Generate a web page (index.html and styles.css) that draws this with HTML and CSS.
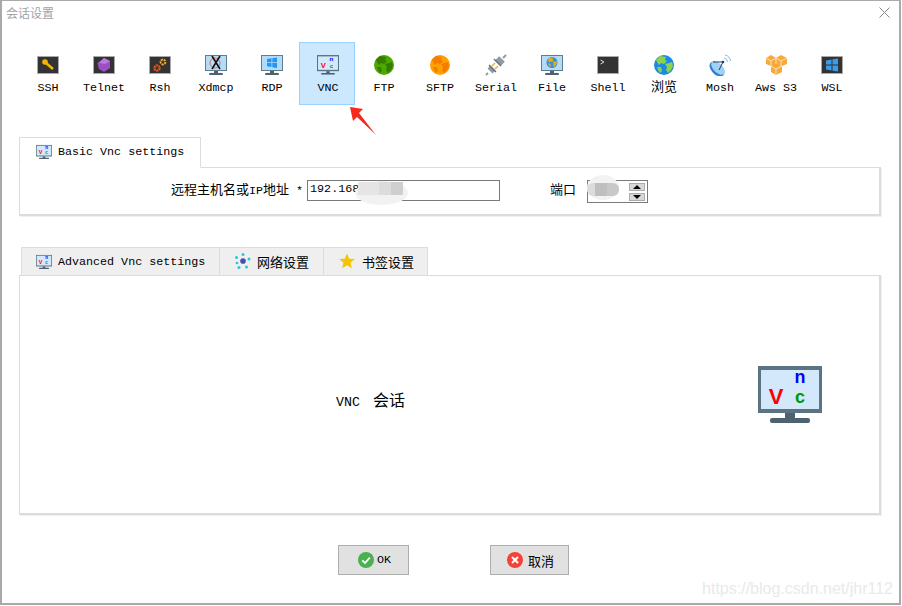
FILE: index.html
```html
<!DOCTYPE html>
<html lang="zh-CN">
<head>
  <meta charset="UTF-8">
  <meta name="viewport" content="width=device-width, initial-scale=1.0">
  <title>会话设置</title>
  <link rel="stylesheet" href="styles.css">
</head>
<body>
  <!-- icon sheet -->
  <svg class="sheet" aria-hidden="true">
    <symbol id="i-screen" viewBox="0 0 64 57">
      <rect width="64" height="47" fill="#5b7482"/>
      <rect x="3" y="4" width="58" height="39" fill="#d3e8fb"/>
      <rect x="27" y="47" width="10" height="6" fill="#4d6470"/>
      <rect x="12" y="52" width="40" height="5" rx="2" fill="#4d6470"/>
    </symbol>
    <symbol id="i-monitor" viewBox="0 0 22 20">
      <rect width="22" height="16" fill="#5f7d8c"/>
      <rect x="1" y="1" width="20" height="14" fill="#b3dcfa"/>
      <rect x="9" y="16" width="4" height="2" fill="#4d6470"/>
      <rect x="4" y="18" width="14" height="2" rx="1" fill="#4d6470"/>
    </symbol>
    <symbol id="i-dark" viewBox="0 0 22 18">
      <rect width="22" height="18" fill="#aaa"/>
      <rect x="1" y="1" width="20" height="16" fill="#333"/>
    </symbol>
    <symbol id="i-land" viewBox="0 0 20 20">
      <path d="M6 1 L12 2 L11 5 L13 6 L10 9 L7 8 L5 10 L3 7 L2 5 Z"/>
      <path d="M11 9 L15 8 L18 7 L19 11 L17 15 L14 18 L12 15 L13 12 Z"/>
      <path d="M3 12 L7 12 L8 16 L6 18 L4 15 Z"/>
    </symbol>
  </svg>

  <div class="window">
    <div class="titlebar">
      <span class="title">会话设置</span>
      <svg class="close" viewBox="0 0 11 11"><path d="M0.5 0.5 L10.500 10.500 M10.500 0.500 L0.500 10.500" stroke="#888" fill="none"/></svg>
    </div>

    <div class="toolbar">
      <div class="tool">
        <svg class="tool-icon" viewBox="0 0 22 22">
          <use href="#i-dark" x="0" y="2" width="22" height="18"/>
          <circle cx="8" cy="8" r="2.800" fill="#f4b400"/>
          <path d="M9 9 L16 15" stroke="#f4b400" stroke-width="2.500"/>
        </svg>
        <span class="tool-name">SSH</span>
      </div>
      <div class="tool">
        <svg class="tool-icon" viewBox="0 0 22 22">
          <use href="#i-dark" x="0" y="2" width="22" height="18"/>
          <path d="M11 4 L17 7 L17 14 L11 18 L6 15 L4.500 9 Z" fill="#9c4fc4"/>
          <path d="M11 4 L17 7 L12 10 L6 9 Z" fill="#b77be0"/>
        </svg>
        <span class="tool-name">Telnet</span>
      </div>
      <div class="tool">
        <svg class="tool-icon" viewBox="0 0 22 22">
          <use href="#i-dark" x="0" y="2" width="22" height="18"/>
          <circle cx="14" cy="8" r="2.400" fill="none" stroke="#f5a623" stroke-width="2" stroke-dasharray="2 0.700"/>
          <circle cx="8" cy="14" r="2.600" fill="none" stroke="#e8561f" stroke-width="2.200" stroke-dasharray="2 0.700"/>
        </svg>
        <span class="tool-name">Rsh</span>
      </div>
      <div class="tool">
        <svg class="tool-icon" viewBox="0 0 22 22">
          <use href="#i-monitor" x="0" y="1" width="22" height="20"/>
          <circle cx="10" cy="9" r="5" fill="none" stroke="#d9724a" stroke-width="1"/>
          <path d="M7 2 L15 15 M15 2 L7 15" stroke="#111" stroke-width="1.600"/>
        </svg>
        <span class="tool-name">Xdmcp</span>
      </div>
      <div class="tool">
        <svg class="tool-icon" viewBox="0 0 22 22">
          <use href="#i-monitor" x="0" y="1" width="22" height="20"/>
          <path d="M6 5 L10.500 4.300 V8.300 H6 Z M11.300 4.200 L16 3.500 V8.300 H11.300 Z M6 9 H10.500 V13 L6 12.300 Z M11.300 9 H16 V14 L11.300 13.200 Z" fill="#2196f3"/>
        </svg>
        <span class="tool-name">RDP</span>
      </div>
      <div class="tool tool-active">
        <svg class="tool-icon" viewBox="0 -3 64 64">
          <use href="#i-screen" width="64" height="57"/>
          <text x="18" y="38" class="logo-letter" fill="#f00" font-size="22">V</text>
          <text x="42" y="16.500" class="logo-letter" fill="#00f" font-size="18">n</text>
          <text x="42" y="37" class="logo-letter" fill="#090" font-size="18">c</text>
        </svg>
        <span class="tool-name">VNC</span>
      </div>
      <div class="tool">
        <svg class="tool-icon" viewBox="0 0 22 22">
          <circle cx="11" cy="11" r="10" fill="#4fa800"/>
          <use href="#i-land" x="1" y="1" width="20" height="20" fill="#347d00"/>
        </svg>
        <span class="tool-name">FTP</span>
      </div>
      <div class="tool">
        <svg class="tool-icon" viewBox="0 0 22 22">
          <circle cx="11" cy="11" r="10" fill="#ffa000"/>
          <use href="#i-land" x="1" y="1" width="20" height="20" fill="#f57c00"/>
        </svg>
        <span class="tool-name">SFTP</span>
      </div>
      <div class="tool">
        <svg class="tool-icon" viewBox="0 0 22 22">
          <path d="M13 9 L17 5" stroke="#8f9ba3" stroke-width="8"/>
          <path d="M18 4 L21 1" stroke="#8f9ba3" stroke-width="2"/>
          <path d="M5 17 L8 14" stroke="#8f9ba3" stroke-width="7"/>
          <path d="M3 19 L1 21" stroke="#8f9ba3" stroke-width="2"/>
          <path d="M9 5 L16 12" stroke="#5f7480" stroke-width="1.500"/>
          <path d="M4 11 L11 18" stroke="#5f7480" stroke-width="1.500"/>
          <path d="M7 12 L10 9 M10 15 L13 12" stroke="#f5b335" stroke-width="1.500"/>
        </svg>
        <span class="tool-name">Serial</span>
      </div>
      <div class="tool">
        <svg class="tool-icon" viewBox="0 0 22 22">
          <use href="#i-monitor" x="0" y="1" width="22" height="20"/>
          <circle cx="11" cy="8.500" r="5.500" fill="#3b8edb"/>
          <use href="#i-land" x="5.500" y="3" width="11" height="11" fill="#d8b020"/>
        </svg>
        <span class="tool-name">File</span>
      </div>
      <div class="tool">
        <svg class="tool-icon" viewBox="0 0 22 22">
          <use href="#i-dark" x="0" y="2" width="22" height="18"/>
          <path d="M3.500 6 L7 8 L3.500 10" stroke="#ddd" fill="none"/>
        </svg>
        <span class="tool-name">Shell</span>
      </div>
      <div class="tool">
        <svg class="tool-icon" viewBox="0 0 22 22">
          <circle cx="11" cy="11" r="10" fill="#1e88e5"/>
          <use href="#i-land" x="1" y="1" width="20" height="20" fill="#8bd34a"/>
        </svg>
        <span class="tool-name cjk">浏览</span>
      </div>
      <div class="tool">
        <svg class="tool-icon" viewBox="0 0 22 22">
          <ellipse cx="8" cy="15" rx="5.500" ry="9" transform="rotate(-45 8 15)" fill="#2f7fd0"/>
          <ellipse cx="9" cy="14" rx="4.500" ry="8.500" transform="rotate(-45 9 14)" fill="#9fd0f8"/>
          <path d="M4 8 L14 8 M14 8 L10 16" stroke="#1c3f66" fill="none"/>
          <circle cx="14" cy="8" r="1.300" fill="#1c3f66"/>
          <path d="M15 4 A4 4 0 0 1 18.500 8 M16 1 A7 7 0 0 1 21.500 7" stroke="#7fbdf0" fill="none"/>
        </svg>
        <span class="tool-name">Mosh</span>
      </div>
      <div class="tool">
        <svg class="tool-icon" viewBox="0 0 22 22">
          <path d="M1 4 L6 1 L11 4 L16 1 L22 4 L22 10 L17 12 L17 18 L11 21 L6 18 L6 12 L1 10 Z" fill="#f8a93a"/>
          <path d="M1 4 L6 7 L11 4 M11 4 L16 7 L22 4 M6 7 V12 M16 7 V12 M11 4 V10 M6 12 L11 15 L17 12 M11 15 V21" stroke="#fde0b0" fill="none"/>
        </svg>
        <span class="tool-name">Aws S3</span>
      </div>
      <div class="tool">
        <svg class="tool-icon" viewBox="0 0 22 22">
          <use href="#i-dark" x="0" y="2" width="22" height="18"/>
          <path d="M5 6.500 L10.500 5.500 V10.500 H5 Z M11.500 5.300 L17 4.500 V10.500 H11.500 Z M5 11.500 H10.500 V16.500 L5 15.500 Z M11.500 11.500 H17 V17.500 L11.500 16.700 Z" fill="#3b9be8"/>
        </svg>
        <span class="tool-name">WSL</span>
      </div>
    </div>

    <div class="arrow-mark">
      <svg viewBox="0 0 32 32" width="32" height="32"><path d="M1 1 L14 3 L10 7 L27 29 L8 11 L4 15 Z" fill="#f5291c"/></svg>
    </div>

    <section class="group">
      <div class="tabs">
        <div class="tab tab-open">
          <svg class="tab-icon" viewBox="0 -3 64 64">
            <use href="#i-screen" width="64" height="57"/>
            <text x="18" y="38" class="logo-letter" fill="#f00" font-size="22">V</text>
            <text x="42" y="16.500" class="logo-letter" fill="#00f" font-size="18">n</text>
            <text x="42" y="37" class="logo-letter" fill="#090" font-size="18">c</text>
          </svg>
          <span>Basic Vnc settings</span>
        </div>
      </div>
      <div class="panel panel-basic">
        <label class="field-label"><span class="cjk">远程主机名或</span>IP<span class="cjk">地址</span> *</label>
        <div class="text-input">
          192.168
          <div class="smudge smudge-host">
            <i class="patch patch-a"></i><i class="patch patch-b"></i><i class="patch patch-c"></i>
          </div>
        </div>
        <label class="field-label port-label"><span class="cjk">端口</span></label>
        <div class="spinner">
          <div class="smudge smudge-port">
            <i class="patch patch-d"></i><i class="patch patch-e"></i><i class="patch patch-f"></i>
          </div>
          <div class="spin-buttons">
            <div class="spin-btn"><i class="tri-up"></i></div>
            <div class="spin-btn"><i class="tri-down"></i></div>
          </div>
        </div>
      </div>
    </section>

    <section class="group group-advanced">
      <div class="tabs tabs-inset">
        <div class="tab tab-wide">
          <svg class="tab-icon" viewBox="0 -3 64 64">
            <use href="#i-screen" width="64" height="57"/>
            <text x="18" y="38" class="logo-letter" fill="#f00" font-size="22">V</text>
            <text x="42" y="16.500" class="logo-letter" fill="#00f" font-size="18">n</text>
            <text x="42" y="37" class="logo-letter" fill="#090" font-size="18">c</text>
          </svg>
          <span>Advanced Vnc settings</span>
        </div>
        <div class="tab tab-net">
          <svg class="tab-icon" viewBox="0 0 16 16">
            <circle cx="8" cy="8" r="2.800" fill="#3f51b5"/>
            <circle cx="8" cy="1.500" r="1.500" fill="#26c6da"/>
            <circle cx="1.500" cy="4.500" r="1.500" fill="#26c6da"/>
            <circle cx="14" cy="6" r="1.500" fill="#26c6da"/>
            <circle cx="2" cy="10" r="1.300" fill="#26c6da"/>
            <circle cx="4" cy="14.500" r="1.500" fill="#26c6da"/>
            <circle cx="11.500" cy="14" r="1.500" fill="#26c6da"/>
          </svg>
          <span class="cjk">网络设置</span>
        </div>
        <div class="tab tab-mark">
          <svg class="tab-icon" viewBox="0 0 16 16"><path d="M8 0.500 L10.200 5.700 L15.800 6.100 L11.500 9.700 L12.900 15.200 L8 12.300 L3.100 15.200 L4.500 9.700 L0.200 6.100 L5.800 5.700 Z" fill="#f5c400"/></svg>
          <span class="cjk">书签设置</span>
        </div>
      </div>
      <div class="panel panel-advanced">
        <div class="session-name">VNC <span class="session-cjk">会话</span></div>
        <svg class="session-logo" viewBox="0 0 64 57">
          <use href="#i-screen" width="64" height="57"/>
          <text x="18" y="38" class="logo-letter" fill="#f00" font-size="22">V</text>
          <text x="42" y="16.500" class="logo-letter" fill="#00f" font-size="18">n</text>
          <text x="42" y="37" class="logo-letter" fill="#090" font-size="18">c</text>
        </svg>
      </div>
    </section>

    <div class="actions">
      <button class="btn btn-ok">
        <svg class="btn-icon" viewBox="0 0 16 16">
          <circle cx="8" cy="8" r="8" fill="#4caf50"/>
          <path d="M4.200 8.300 L7 11 L11.800 5.600" stroke="#fff" stroke-width="1.800" fill="none"/>
        </svg>
        OK
      </button>
      <button class="btn btn-cancel">
        <svg class="btn-icon" viewBox="0 0 16 16">
          <circle cx="8" cy="8" r="8" fill="#f44336"/>
          <path d="M5 5 L11 11 M11 5 L5 11" stroke="#fff" stroke-width="2" fill="none"/>
        </svg>
        <span class="cjk">取消</span>
      </button>
    </div>

    <div class="watermark">https://blog.csdn.net/jhr112</div>
  </div>
</body>
</html>
```

FILE: styles.css
```css
* {
  box-sizing: border-box;
}

html, body {
  margin: 0;
  padding: 0;
  background: #fff;
}

body {
  font-family: "Liberation Mono", "Noto Sans CJK SC", monospace;
  font-size: 11.7px;
  color: #000;
}

.cjk {
  font-family: "Noto Sans CJK SC", sans-serif;
  font-size: 13px;
}

.sheet {
  position: absolute;
  width: 0;
  height: 0;
}

.logo-letter {
  font-family: "Liberation Sans", sans-serif;
  font-weight: bold;
  text-anchor: middle;
}

/* window frame */
.window {
  position: relative;
  width: 901px;
  height: 605px;
  background: #fff;
  border-style: solid;
  border-color: #a9a9a9;
  border-width: 1px 2px 2px 2px;
}

.titlebar {
  display: flex;
  align-items: center;
  justify-content: space-between;
  height: 23px;
  padding: 0 9px 0 4px;
}

.title {
  font-family: "Noto Sans CJK SC", sans-serif;
  font-size: 12px;
  color: #a3a3a3;
}

.close {
  width: 11px;
  height: 11px;
}

/* session type toolbar */
.toolbar {
  display: flex;
  margin: 18px 0 0 17px;
}

.tool {
  display: flex;
  flex-direction: column;
  align-items: center;
  width: 56px;
  height: 63px;
  padding: 11px 0 0 2px;
  border: 1px solid transparent;
}

.tool-active {
  background: #cce8ff;
  border-color: #99d1ff;
}

.tool-icon {
  width: 22px;
  height: 22px;
}

.tool-name {
  margin-top: 5px;
  line-height: 14px;
  white-space: nowrap;
}

.tool-name.cjk {
  margin-top: 3px;
}

.arrow-mark {
  position: absolute;
  left: 347px;
  top: 105px;
  width: 32px;
  height: 32px;
}

/* tabbed groups */
.group {
  margin: 32px 0 0 17px;
  width: 862px;
}

.group-advanced {
  margin-top: 31px;
}

.tabs {
  display: flex;
}

.tabs-inset {
  padding-left: 2px;
}

.tab {
  display: flex;
  align-items: center;
  gap: 7px;
  height: 28px;
  background: #efefef;
  border: 1px solid #dcdcdc;
  border-bottom: 0;
  border-left: 0;
  white-space: nowrap;
}

.tab-wide {
  gap: 6px;
  width: 199px;
  padding: 0 0 0 14px;
  border-left: 1px solid #dcdcdc;
}

.tab-net {
  gap: 6px;
  padding: 0 14px 1px 15px;
}

.tab-mark {
  padding: 0 13px 1px 15px;
}

.tab-open {
  position: relative;
  gap: 6px;
  height: 31px;
  margin-bottom: -1px;
  padding: 0 16px 1px;
  background: #fff;
  border-left: 1px solid #dcdcdc;
  border-bottom: 1px solid #fff;
  z-index: 1;
}

.tab-icon {
  flex: none;
  width: 16px;
  height: 16px;
}

.panel {
  display: flex;
  background: #fff;
  border: 1px solid #dcdcdc;
  border-bottom-width: 2px;
  border-right-width: 2px;
  box-shadow: 1px 1px 0 #f0f0f0;
}

.panel-basic {
  height: 49px;
  padding: 12px 0 0 151px;
  align-items: flex-start;
}

.panel-advanced {
  height: 240px;
  padding: 0 57px 0 316px;
  align-items: center;
  justify-content: space-between;
}

.field-label {
  line-height: 18px;
  white-space: pre;
}

.text-input {
  position: relative;
  width: 193px;
  height: 21px;
  margin-left: 4px;
  padding-left: 2px;
  border: 1px solid #7a7a7a;
  line-height: 17px;
}

.port-label {
  margin-left: 50px;
}

.spinner {
  position: relative;
  display: flex;
  justify-content: flex-end;
  width: 61px;
  height: 23px;
  margin-left: 11px;
  padding: 2px 2px 0 0;
  border: 1px solid #7a7a7a;
}

.spin-buttons {
  display: flex;
  flex-direction: column;
  gap: 2px;
}

.spin-btn {
  display: flex;
  align-items: center;
  justify-content: center;
  width: 16px;
  height: 8px;
  background: #d8d8d8;
  border: 1px solid #ababab;
}

.tri-up {
  border-left: 4px solid transparent;
  border-right: 4px solid transparent;
  border-bottom: 4px solid #000;
}

.tri-down {
  border-left: 4px solid transparent;
  border-right: 4px solid transparent;
  border-top: 4px solid #000;
}

/* blurred-out parts of the address and port */
.smudge {
  position: absolute;
  display: flex;
  background: #f2f2f2;
  border-radius: 50%;
}

.smudge-host {
  left: 47px;
  top: 0;
  width: 53px;
  height: 24px;
  padding-top: 1px;
  padding-left: 3px;
}

.smudge-port {
  left: -1px;
  top: -6px;
  width: 32px;
  height: 25px;
  padding-top: 8px;
}

.patch {
  display: block;
  height: 13px;
}

.patch-a { width: 21px; background: #e5e5e5; }
.patch-b { width: 12px; background: #dcdcdc; }
.patch-c { width: 12px; background: #cfcfcf; }
.patch-d { width: 8px; background: #dcdcdc; border-radius: 6px 0 0 6px; }
.patch-e { width: 12px; background: #bfbfbf; }
.patch-f { width: 12px; background: #c8c8c8; border-radius: 0 6px 6px 0; }

.session-name {
  margin-top: 8px;
  font-size: 13.300px;
  white-space: pre;
}

.session-cjk {
  margin-left: 5px;
  font-family: "Noto Sans CJK SC", sans-serif;
  font-size: 16px;
}

.session-logo {
  width: 64px;
  height: 57px;
}

/* dialog buttons */
.actions {
  display: flex;
  gap: 81px;
  margin: 30px 0 0 336px;
}

.btn {
  display: flex;
  align-items: center;
  justify-content: center;
  gap: 4px;
  height: 30px;
  padding: 0 0 0 2px;
  background: #e1e1e1;
  border: 1px solid #adadad;
  font: inherit;
  color: #000;
}

.btn-ok {
  gap: 3px;
  width: 71px;
}

.btn-cancel {
  gap: 5px;
  width: 79px;
}

.btn-icon {
  width: 16px;
  height: 16px;
}

.watermark {
  position: absolute;
  right: 6px;
  bottom: 5px;
  font-family: "Liberation Sans", sans-serif;
  font-size: 16px;
  color: #e9e9e9;
}
```
